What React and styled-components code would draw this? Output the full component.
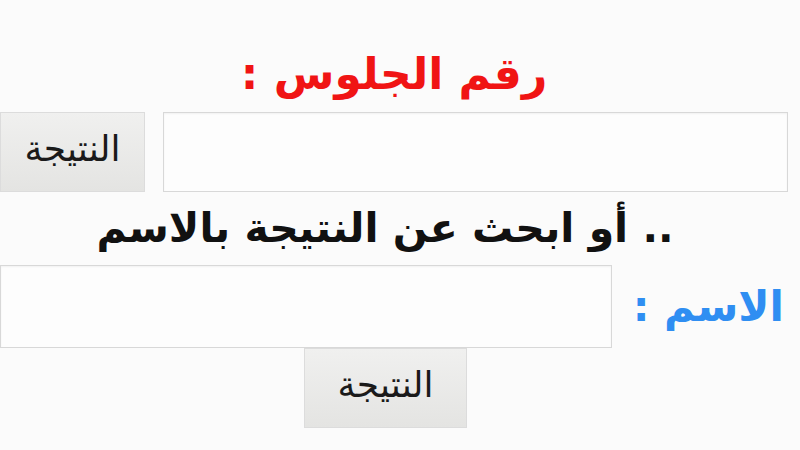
import styled, { createGlobalStyle } from "styled-components";

const Global = createGlobalStyle`
  html, body {
    margin: 0;
    padding: 0;
    background: #fbfbfb;
  }
  body {
    font-family: "DejaVu Sans", sans-serif;
  }
`;

const Page = styled.div`
  direction: rtl;
  width: 800px;
  height: 450px;
  box-sizing: border-box;
  padding: 44px 12px 0 0;
  display: flex;
  flex-direction: column;
  align-items: center;
  overflow: hidden;
`;

const Title = styled.h1`
  margin: 0;
  font-size: ${(p) => p.size}px;
  font-weight: bold;
  color: ${(p) => p.color || "#111"};
  line-height: ${(p) => p.lh}px;
  width: 100%;
  text-align: center;
  padding-right: ${(p) => p.offset || 0}px;
  box-sizing: border-box;
`;

const Row = styled.div`
  display: flex;
  align-items: center;
  width: 100%;
  gap: ${(p) => p.gap}px;
  margin-top: ${(p) => p.top || 0}px;
`;

const Input = styled.input`
  width: ${(p) => p.w}px;
  height: ${(p) => p.h}px;
  box-sizing: border-box;
  border: 1px solid #d8d8d8;
  background: #fdfdfd;
  box-shadow: inset 0 1px 2px rgba(0, 0, 0, 0.05);
  outline: none;
`;

const Button = styled.button`
  width: ${(p) => p.w}px;
  height: 80px;
  box-sizing: border-box;
  border: 1px solid #dcdcdc;
  background: linear-gradient(#f0f0ef, #e4e4e2);
  font-family: "DejaVu Sans", sans-serif;
  font-size: 36px;
  color: #1a1a1a;
  padding: 0 0 8px;
`;

const Label = styled.span`
  font-size: 42px;
  font-weight: bold;
  color: #2f8ef2;
  width: 156px;
  box-sizing: border-box;
  padding-right: 4px;
  text-align: right;
  white-space: nowrap;
`;

const Center = styled.div`
  width: 100%;
  display: flex;
  justify-content: center;
  padding-right: 17px;
  box-sizing: border-box;
`;

export default function App() {
  return (
    <>
      <Global />
      <Page>
        <Title color="#f01414" size={44} lh={60} offset={-16}>
          رقم الجلوس :
        </Title>
        <Row gap={18} top={8}>
          <Input w={625} h={80} />
          <Button w={145}>النتيجة</Button>
        </Row>
        <Title size={41} lh={73} offset={18}>
          .. أو ابحث عن النتيجة بالاسم
        </Title>
        <Row gap={20}>
          <Label>الاسم :</Label>
          <Input w={612} h={83} />
        </Row>
        <Center>
          <Button w={163}>النتيجة</Button>
        </Center>
      </Page>
    </>
  );
}
